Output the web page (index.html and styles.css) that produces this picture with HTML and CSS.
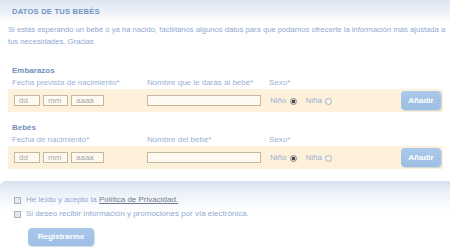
FILE: index.html
```html
<!DOCTYPE html>
<html lang="es">
<head>
<meta charset="utf-8">
<title>Datos de tus bebés</title>
<link rel="stylesheet" href="styles.css">
</head>
<body>
<div class="header"><h1 class="title">DATOS DE TUS BEBÉS</h1></div>
<p class="intro">Si estás esperando un bebé o ya ha nacido, facilítanos algunos datos para que podamos ofrecerte la información más ajustada a tus necesidades. Gracias</p>

<section class="group group-first">
  <h2 class="group-title">Embarazos</h2>
  <div class="labels">
    <span>Fecha prevista de nacimiento*</span>
    <span>Nombre que le darás al bebé*</span>
    <span>Sexo*</span>
  </div>
  <div class="band">
    <div class="date">
      <span class="field f-d">dd</span>
      <span class="field f-m">mm</span>
      <span class="field f-y">aaaa</span>
    </div>
    <span class="field f-name"></span>
    <div class="sex">
      <span>Niño</span><span class="radio checked"></span>
      <span class="sex-2">Niña</span><span class="radio"></span>
    </div>
    <span class="btn btn-add">Añadir</span>
  </div>
</section>

<section class="group">
  <h2 class="group-title">Bebés</h2>
  <div class="labels">
    <span>Fecha de nacimiento*</span>
    <span>Nombre del bebé*</span>
    <span>Sexo*</span>
  </div>
  <div class="band">
    <div class="date">
      <span class="field f-d">dd</span>
      <span class="field f-m">mm</span>
      <span class="field f-y">aaaa</span>
    </div>
    <span class="field f-name"></span>
    <div class="sex">
      <span>Niño</span><span class="radio checked"></span>
      <span class="sex-2">Niña</span><span class="radio"></span>
    </div>
    <span class="btn btn-add">Añadir</span>
  </div>
</section>

<div class="footer">
  <div class="check-row"><span class="checkbox"></span><span>He leído y acepto la <a class="link" href="#">Política de Privacidad.</a></span></div>
  <div class="check-row"><span class="checkbox"></span><span>Si deseo recibir información y promociones por vía electrónica.</span></div>
  <span class="btn btn-register">Registrarme</span>
</div>
</body>
</html>
```
FILE: styles.css
```css
html, body {
  margin: 0;
  padding: 0;
  background: #ffffff;
}
body {
  font-family: "Liberation Sans", Arial, sans-serif;
  font-size: 8px;
  color: #8fa9d2;
  width: 450px;
  overflow: hidden;
}
.header {
  height: 22px;
  background: linear-gradient(to bottom, #dbe5f1 0%, #eef3f9 60%, #ffffff 100%);
  padding: 0 12px;
}
.title {
  margin: 0;
  font-size: 7.6px;
  line-height: 23px;
  font-weight: bold;
  color: #7394c2;
  letter-spacing: 0.2px;
}
.intro {
  margin: 2px 0 0;
  padding: 0 0 0 8px;
  line-height: 12px;
  font-size: 7.7px;
  letter-spacing: -0.02px;
  color: #8fa9d2;
}
.group {
  margin-top: 10px;
}
.group-first {
  margin-top: 17px;
}
.group-title {
  margin: 0;
  padding-left: 12px;
  font-size: 8px;
  line-height: 12px;
  font-weight: bold;
  color: #7390bb;
}
.labels {
  display: grid;
  grid-template-columns: 135px 122px 1fr;
  padding-left: 12px;
  line-height: 11px;
  color: #9ab1d5;
}
.band {
  margin: 1px 7px 0 8px;
  height: 23px;
  background: #fdf1dc;
  display: grid;
  grid-template-columns: 133px 122px 1fr auto;
  align-items: center;
  padding: 0 2px 0 6px;
}
.date {
  display: flex;
  gap: 3px;
}
.field {
  box-sizing: border-box;
  height: 11px;
  border: 1px solid #c5b89f;
  background: #fffaf1;
  color: #a8a8a8;
  line-height: 9px;
  padding-left: 4px;
  font-size: 8px;
  display: block;
}
.f-d { width: 26px; }
.f-m { width: 25px; }
.f-y { width: 33px; }
.f-name { width: 114px; }
.sex {
  display: flex;
  align-items: center;
  color: #9ab1d5;
  padding-left: 1px;
}
.sex-2 { margin-left: 8px; }
.radio {
  box-sizing: border-box;
  width: 7px;
  height: 7px;
  border-radius: 50%;
  border: 1px solid #b0b0b0;
  background: #f4f4f4;
  margin-left: 4px;
  margin-top: 2px;
}
.sex-2 + .radio { margin-left: 3px; }
.radio.checked {
  background: radial-gradient(circle, #4a4a4a 0 1.8px, #d8d8d8 2px);
  border-color: #8a8a8a;
}
.btn {
  display: inline-block;
  background: linear-gradient(to bottom, #aac8ea, #9dbfe4);
  color: #ffffff;
  font-weight: bold;
  text-align: center;
  border-radius: 4px;
  box-shadow: 1px 1px 1px rgba(160, 180, 200, 0.45);
}
.btn-add {
  width: 40px;
  height: 19px;
  line-height: 19px;
  font-size: 8px;
}
.footer {
  margin-top: 12px;
  padding: 12px 0 0 14px;
  background: linear-gradient(to bottom, #d6e2f0 0%, #eef3f9 45%, #ffffff 100%);
  background-size: 100% 30px;
  background-repeat: no-repeat;
  border-top-left-radius: 6px;
  height: 70px;
  box-sizing: border-box;
}
.check-row {
  display: flex;
  align-items: center;
  line-height: 14px;
  color: #8fa9d2;
}
.checkbox {
  box-sizing: border-box;
  width: 7px;
  height: 7px;
  border: 1px solid #a9b3bf;
  background: #e4e8ee;
  margin-right: 5px;
}
.link {
  color: #6d7b8e;
  text-decoration: underline;
}
.btn-register {
  margin: 7px 0 0 14px;
  width: 66px;
  height: 18px;
  line-height: 18px;
  font-size: 8px;
}
```
